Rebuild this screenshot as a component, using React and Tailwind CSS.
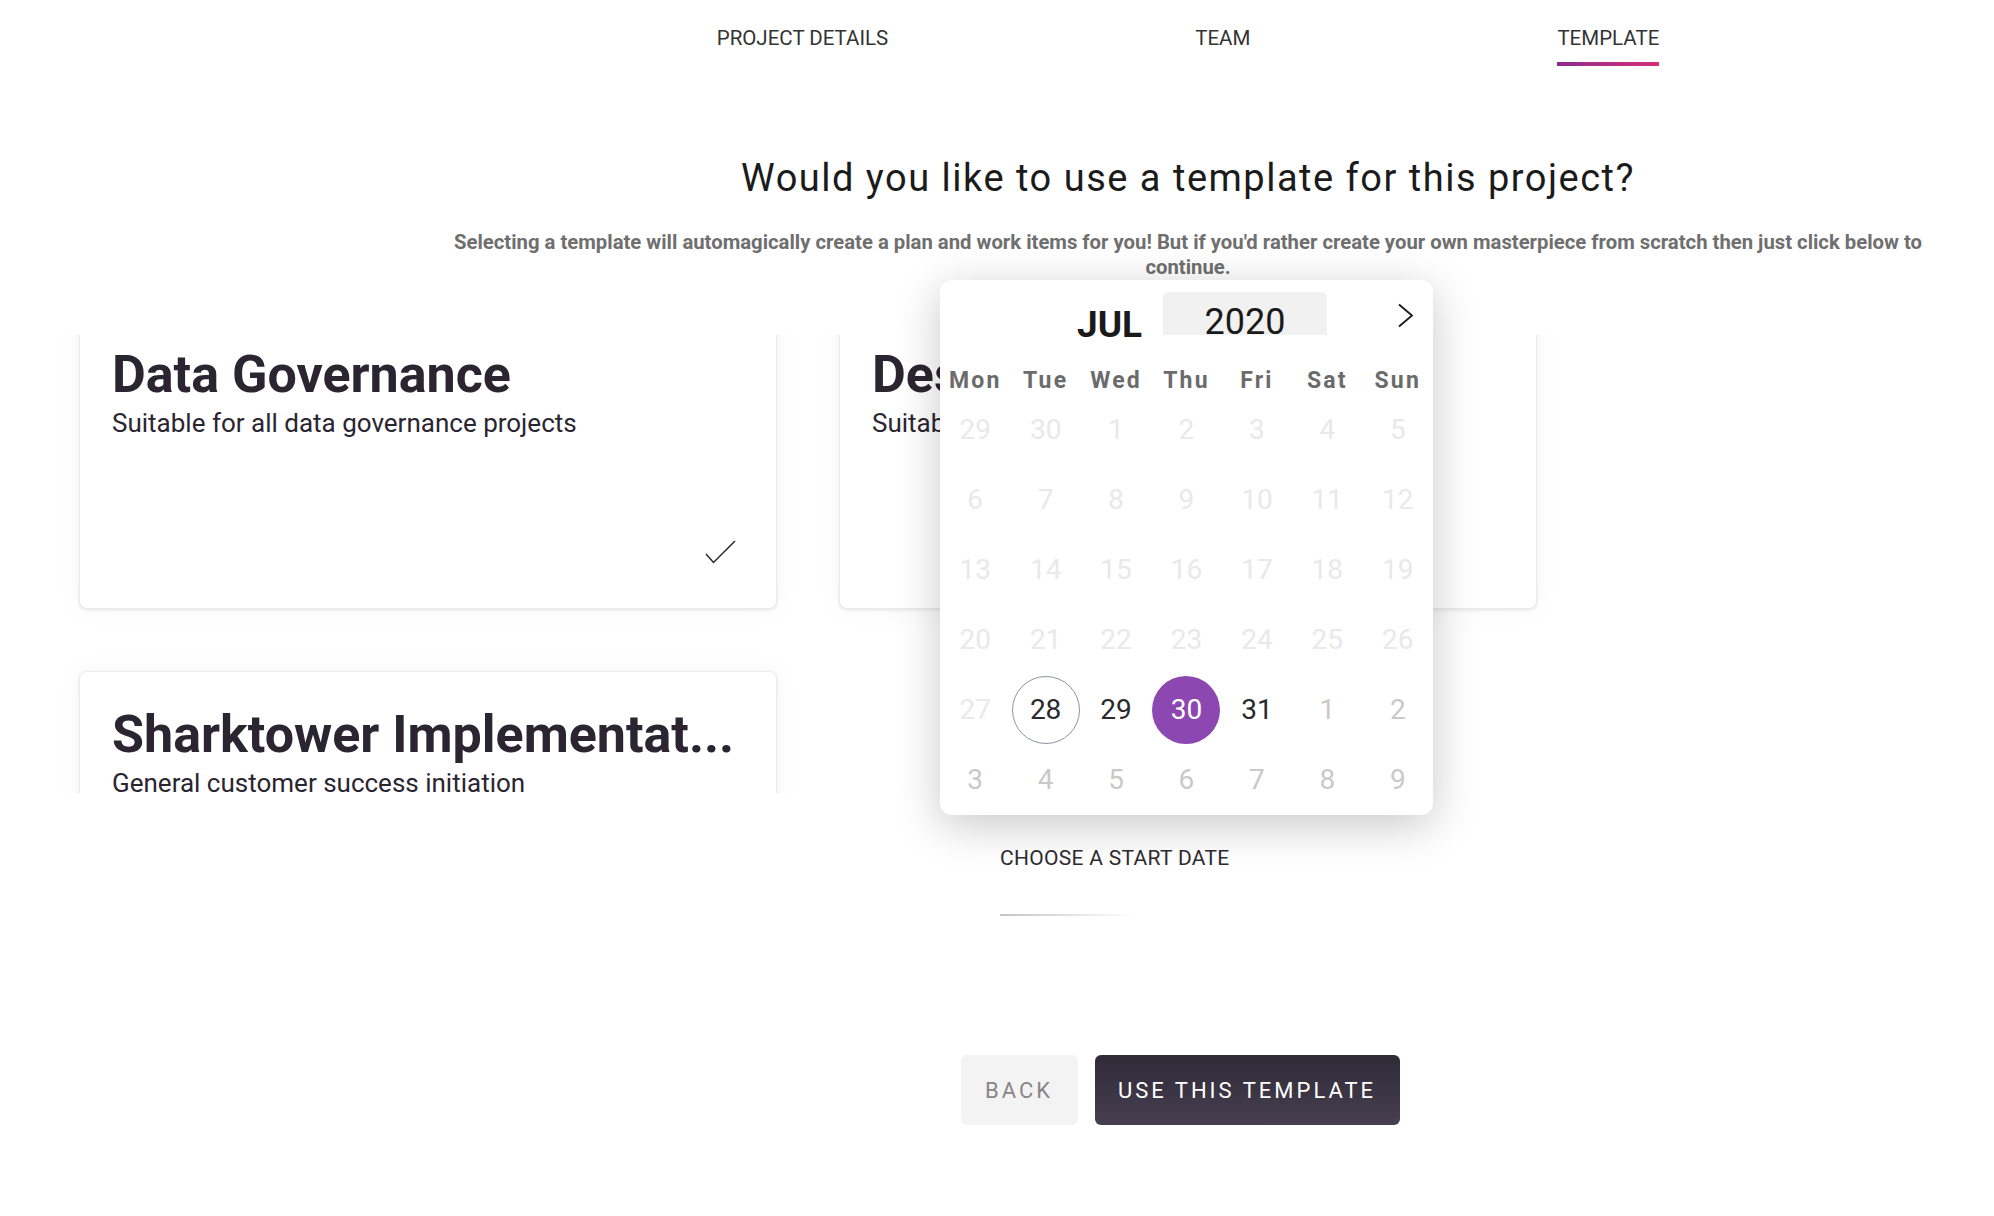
import React from 'react';

const tabs = [
  { label: 'PROJECT DETAILS', active: false },
  { label: 'TEAM', active: false },
  { label: 'TEMPLATE', active: true },
];

const templates = [
  { title: 'Data Governance', desc: 'Suitable for all data governance projects', selected: true },
  { title: 'Design Sprint', desc: 'Suitable for product discovery work', selected: false },
  { title: 'Sharktower Implementat...', desc: 'General customer success initiation', selected: false },
];

// kind: faded (before today), next (next month), today, picked, open
const weeks = [
  [['29', 'faded'], ['30', 'faded'], ['1', 'faded'], ['2', 'faded'], ['3', 'faded'], ['4', 'faded'], ['5', 'faded']],
  [['6', 'faded'], ['7', 'faded'], ['8', 'faded'], ['9', 'faded'], ['10', 'faded'], ['11', 'faded'], ['12', 'faded']],
  [['13', 'faded'], ['14', 'faded'], ['15', 'faded'], ['16', 'faded'], ['17', 'faded'], ['18', 'faded'], ['19', 'faded']],
  [['20', 'faded'], ['21', 'faded'], ['22', 'faded'], ['23', 'faded'], ['24', 'faded'], ['25', 'faded'], ['26', 'faded']],
  [['27', 'faded'], ['28', 'today'], ['29', 'open'], ['30', 'picked'], ['31', 'open'], ['1', 'next'], ['2', 'next']],
  [['3', 'next'], ['4', 'next'], ['5', 'next'], ['6', 'next'], ['7', 'next'], ['8', 'next'], ['9', 'next']],
];

const weekdays = ['Mon', 'Tue', 'Wed', 'Thu', 'Fri', 'Sat', 'Sun'];

function Day({ n, kind }) {
  if (kind === 'today') {
    return (
      <div className="flex h-[68px] w-[68px] items-center justify-center rounded-full border-[1.5px] border-[#8e949e] text-[#2a2a2e]">
        {n}
      </div>
    );
  }
  if (kind === 'picked') {
    return (
      <div className="flex h-[68px] w-[68px] items-center justify-center rounded-full bg-[#8c47b1] text-white">
        {n}
      </div>
    );
  }
  const color =
    kind === 'faded' ? 'text-[#e9e9e9]' : kind === 'next' ? 'text-[#c9c9c9]' : 'text-[#2a2a2e]';
  return <span className={color}>{n}</span>;
}

function Calendar() {
  return (
    <div className="w-[493px] rounded-xl bg-white shadow-[0_10px_45px_rgba(0,0,0,0.22)]">
      <div className="flex h-[84px] items-start pt-[12px] pl-[137px] pr-[19px]">
        <span className="mt-[14px] text-[37px] font-bold leading-none text-[#1a1a1a]">JUL</span>
        <div className="ml-[21px] flex h-[43px] w-[164px] items-end justify-center overflow-hidden rounded-t-md bg-[#f1f1f1]">
          <span className="translate-y-[5px] text-[36px] leading-none text-[#1a1a1a]">2020</span>
        </div>
        <button className="ml-auto mt-[11px] text-[#1a1a1a]">
          <svg width="17" height="25" viewBox="0 0 17 25" fill="none">
            <polyline points="2,1.5 15,12.5 2,23.5" stroke="currentColor" strokeWidth="1.8" />
          </svg>
        </button>
      </div>
      <div className="grid h-[31px] grid-cols-7 items-center">
        {weekdays.map((d) => (
          <span key={d} className="text-center text-[23px] font-bold tracking-[2.2px] text-[#6b6b6b]">
            {d}
          </span>
        ))}
      </div>
      {weeks.map((w, i) => (
        <div key={i} className="grid h-[70px] grid-cols-7">
          {w.map(([n, kind], j) => (
            <div key={j} className="flex items-center justify-center text-[28px]">
              <Day n={n} kind={kind} />
            </div>
          ))}
        </div>
      ))}
    </div>
  );
}

function TemplateCard({ t }) {
  return (
    <div className="flex h-[298px] w-[698px] flex-col rounded-lg border border-[#ececec] bg-white pl-[32px] pt-[33px] pr-[40px] pb-[44px] shadow-[0_1px_3px_rgba(0,0,0,0.10),0_0_28px_rgba(0,0,0,0.04)]">
      <h3 className="truncate text-[52px] font-bold leading-[60px] text-[#2a2530]">{t.title}</h3>
      <p className="mt-[2px] truncate text-[26px] leading-[32px] text-[#2a2530]">{t.desc}</p>
      {t.selected && (
        <svg className="mt-auto self-end" width="31" height="24" viewBox="0 0 31 24" fill="none">
          <polyline points="1,14 8.5,22.5 30,1" stroke="#2a2530" strokeWidth="1.5" />
        </svg>
      )}
    </div>
  );
}

export default function App() {
  return (
    <div className="h-[1216px] w-full overflow-hidden bg-white font-['Roboto',sans-serif] text-[#2a2530]">
      <div className="pl-[382px]">
        <nav className="flex justify-center gap-[307px] pt-[26px]">
          {tabs.map((t) => (
            <div key={t.label} className="flex flex-col">
              <span className="text-[20.5px] leading-[24px] text-[#333]">{t.label}</span>
              {t.active ? (
                <span className="mt-[12px] h-[4px] w-full bg-gradient-to-r from-[#8e2b8c] to-[#d72c79]" />
              ) : (
                <span className="mt-[12px] h-[4px]" />
              )}
            </div>
          ))}
        </nav>
        <h1 className="mt-[90px] text-center text-[38px] leading-[44px] tracking-[1.5px] text-[#1b1b1b]">
          Would you like to use a template for this project?
        </h1>
        <p className="mx-auto mt-[30px] max-w-[1490px] text-center text-[20.3px] font-bold leading-[25px] text-[#6f6f6f]">
          Selecting a template will automagically create a plan and work items for you! But if you'd rather create your own masterpiece from scratch then just click below to continue.
        </p>
      </div>

      <div className="mt-[55px] h-[458px] overflow-hidden pl-[79px]">
        <div className="-mt-[24px] grid w-[1458px] grid-cols-2 gap-[62px] pb-[40px]">
          {templates.map((t) => (
            <TemplateCard key={t.title} t={t} />
          ))}
        </div>
      </div>

      <div className="pl-[382px]">
        <div className="relative mx-auto mt-[53px] w-[376px]">
          <div className="absolute -left-[60px] -top-[566px] z-10">
            <Calendar />
          </div>
          <label className="block text-[21px] leading-[24px] tracking-[0.3px] text-[#2e2b31]">CHOOSE A START DATE</label>
          <div className="mt-[44px] h-[2px] w-full bg-gradient-to-r from-[#c4c4c4] to-transparent to-[36%]" />
        </div>
        <div className="mt-[139px] flex justify-center gap-[17px] pr-[16px]">
          <button className="h-[70px] w-[117px] rounded-md bg-[#f3f3f3] text-[22px] tracking-[3px] text-[#8a8588]">
            BACK
          </button>
          <button className="h-[70px] w-[305px] rounded-md bg-gradient-to-b from-[#302a37] to-[#473f50] text-[22px] tracking-[3px] text-white">
            USE THIS TEMPLATE
          </button>
        </div>
      </div>
    </div>
  );
}
